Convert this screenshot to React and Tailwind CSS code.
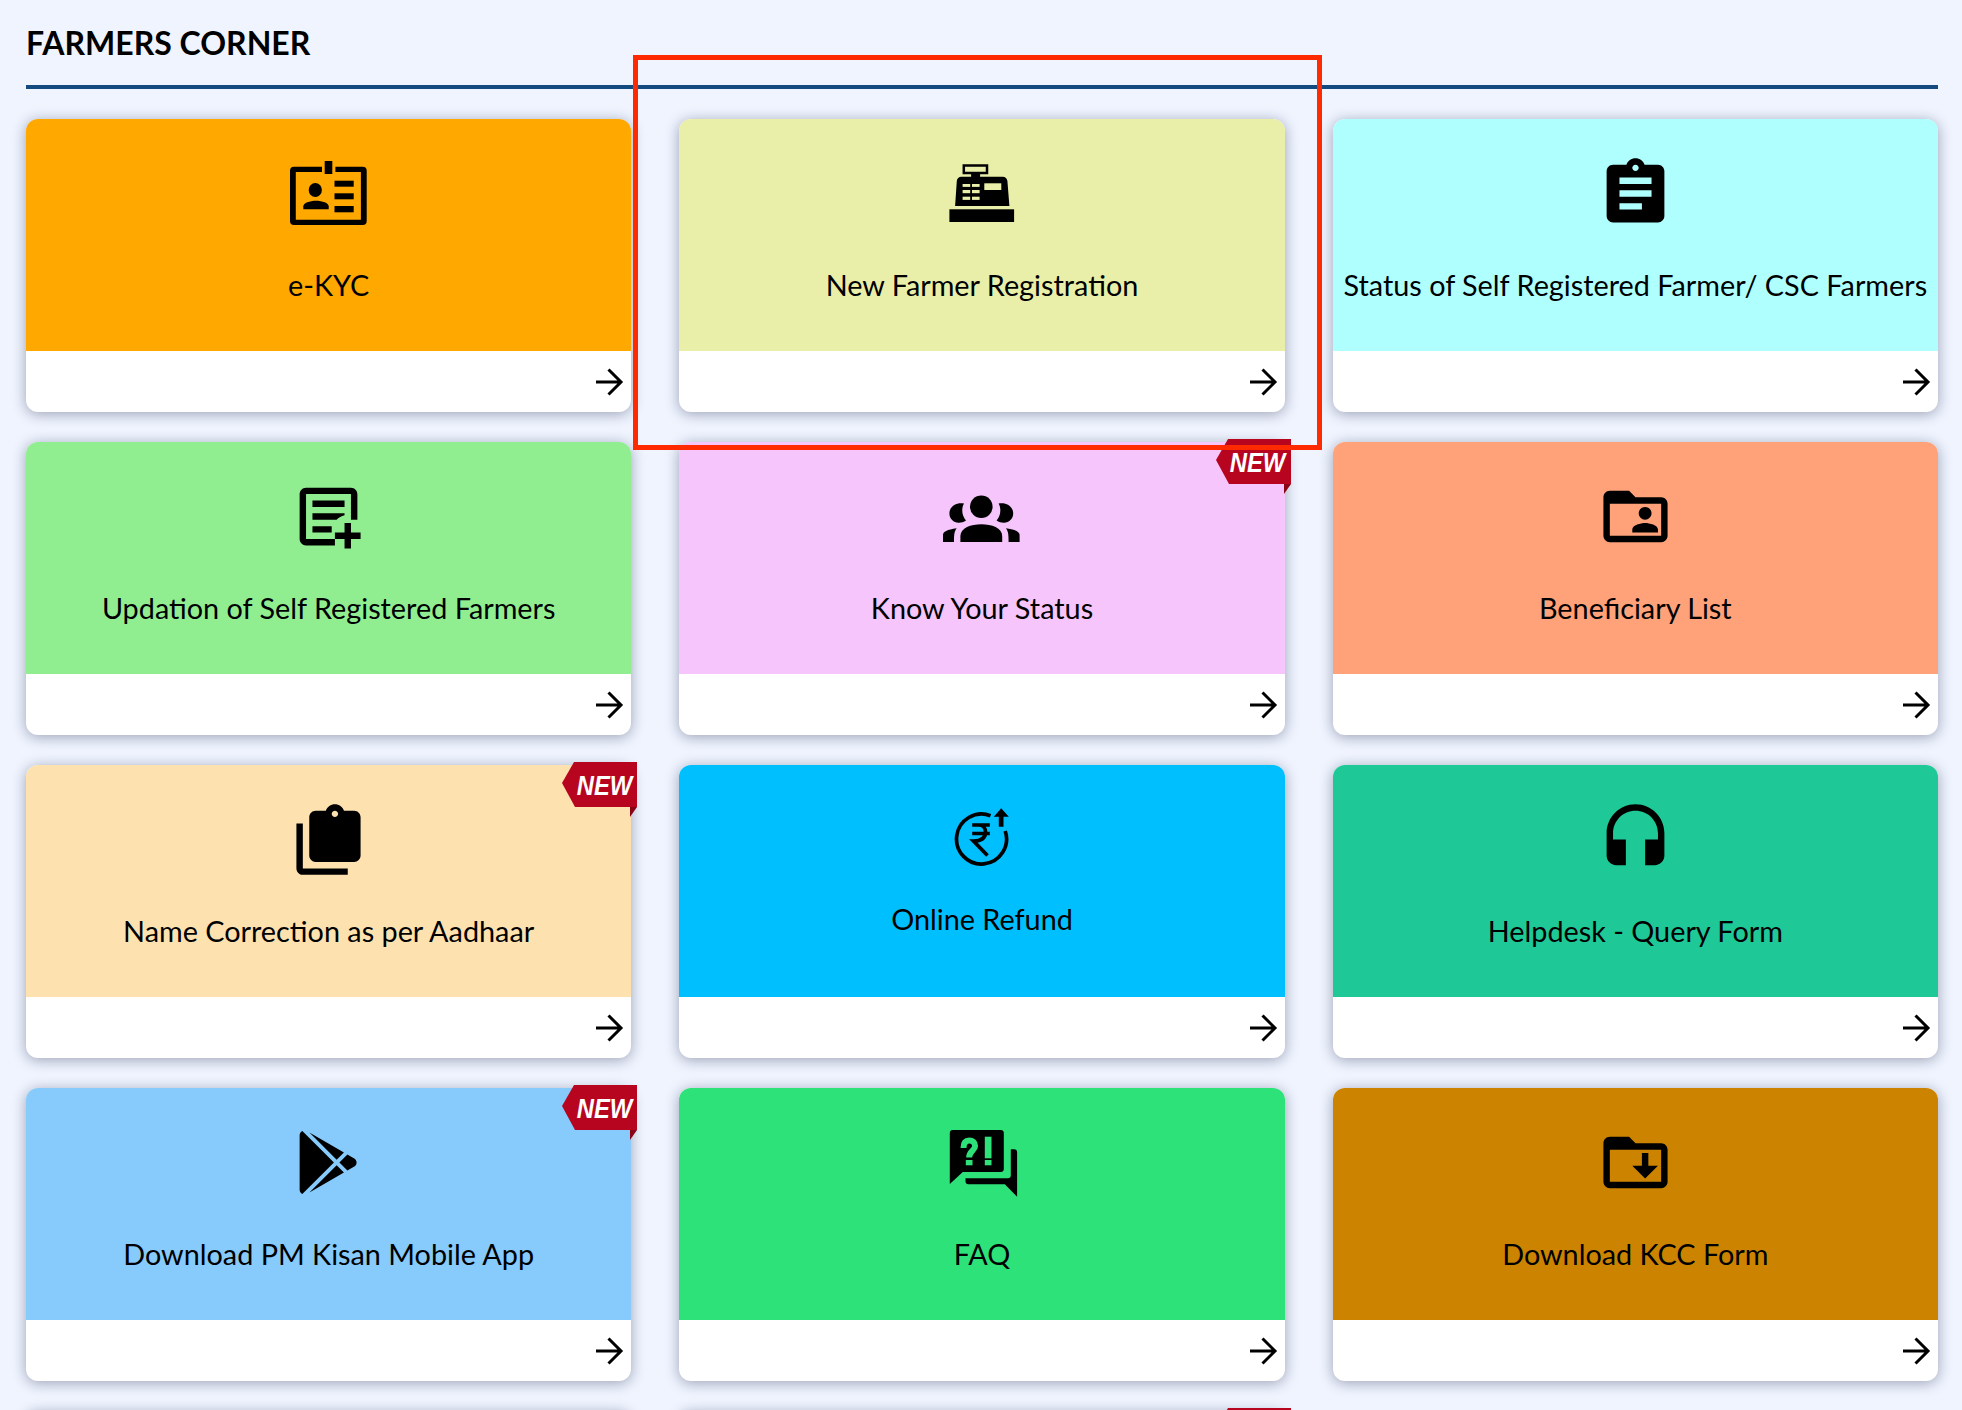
import React from "react";

const Mat = ({ d }) => (
  <svg viewBox="0 0 24 24" className="w-[77px] h-[77px] block" fill="#000">
    <path d={d} />
  </svg>
);

const IdIcon = () => (
  <svg viewBox="0 0 77 77" className="w-[77px] h-[77px] block" fill="#000">
    <path d="M32 11.700H4a4 4 0 0 0-4 4V66a4 4 0 0 0 4 4h68.700a4 4 0 0 0 4-4V15.700a4 4 0 0 0-4-4H45.400v5.300h25.500v47.700H5.800V17H32z" />
    <rect x="34.700" y="6" width="7.600" height="13" />
    <ellipse cx="25.300" cy="35" rx="6.600" ry="7" />
    <path d="M13.300 54.300v-3c0-3.400 6.500-5.600 12.700-5.600s12.700 2.200 12.700 5.600v3z" />
    <rect x="44.500" y="25.700" width="19.200" height="6" />
    <rect x="44.500" y="38.300" width="19.200" height="6" />
    <rect x="44.500" y="51" width="19.200" height="6.300" />
  </svg>
);

const RegisterIcon = () => (
  <svg viewBox="0 0 77 77" className="w-[77px] h-[77px] block">
    <g transform="translate(0.800 0)">
      <rect x="5.600" y="54.300" width="64.700" height="12.700" fill="#000" />
      <path d="M11.300 51 13 26c.2-2.600 2-4.300 4.500-4.300h9.800V19h9v2.700H59c2.500 0 4.300 1.700 4.600 4.300l2 25z" fill="#000" />
      <rect x="20" y="10.500" width="23.200" height="7.500" fill="none" stroke="#000" strokeWidth="2.500" />
      <g fill="#e9efa8">
        <rect x="18.800" y="29" width="7.600" height="2.900" />
        <rect x="28.200" y="29" width="7.600" height="2.900" />
        <rect x="18.800" y="35" width="7.600" height="3.200" />
        <rect x="28.200" y="35" width="7.600" height="3.200" />
        <rect x="18.800" y="41.700" width="7.600" height="3.200" />
        <rect x="28.200" y="41.700" width="7.600" height="3.200" />
        <rect x="40.500" y="28.300" width="17" height="6.700" />
      </g>
    </g>
  </svg>
);

const RefundIcon = () => (
  <svg viewBox="0 0 77 65" className="w-[77px] h-[65px] block" fill="none" stroke="#000">
    <g transform="translate(1.500 0)">
      <path d="M60.700 30A25 25 0 1 1 46 14.700" strokeWidth="3.700" />
      <path d="M56.700 7.300 64.300 15.700H59V25.700H54.300V15.700H49.300z" fill="#000" stroke="none" />
      <path d="M27.700 24H45.300M27.700 32.500H45.300M34 24C39 24 41 27.500 41 31C41 37 37 40 29 40L43 54.500" strokeWidth="3.700" />
    </g>
  </svg>
);

const GroupsIcon = () => (
  <svg viewBox="0 0 77 77" className="w-[77px] h-[77px] block" fill="#000">
    <circle cx="38.300" cy="28.700" r="11.300" />
    <path d="M17.400 64V58C17.400 50 28 46.300 38.300 46.300S59.200 50 59.200 58V64z" />
    <g>
      <path d="M21 25.600C14 24 6.400 28 6.400 35.500C6.400 41 11 45 16 44.700C18 44.700 21 44 23 42.500C19 38 18 31 21 25.600z" />
      <path d="M0 64V57C0 54 4 51.500 13.700 50.300C11.500 53 11 56 11 64z" />
    </g>
    <g transform="translate(76.600 0) scale(-1 1)">
      <path d="M21 25.600C14 24 6.400 28 6.400 35.500C6.400 41 11 45 16 44.700C18 44.700 21 44 23 42.500C19 38 18 31 21 25.600z" />
      <path d="M0 64V57C0 54 4 51.500 13.700 50.300C11.500 53 11 56 11 64z" />
    </g>
  </svg>
);

const FaqIcon = () => (
  <svg viewBox="0 0 77 77" className="w-[77px] h-[77px] block">
    <g transform="translate(0.800 0)">
      <path fill="#000" d="M9 6h48a3 3 0 0 1 3 3v36a3 3 0 0 1-3 3H19L6 60V9a3 3 0 0 1 3-3z" />
      <path fill="#000" d="M67 25.300h3.300a3 3 0 0 1 3 3V72.700L61 60.300H24.700a3 3 0 0 1-3-3V54.300H64a3 3 0 0 0 3-3z" />
      <rect x="41" y="12.700" width="6.700" height="21.600" fill="#2ee27a" />
      <rect x="41" y="36" width="6.700" height="5.300" fill="#2ee27a" />
      <rect x="22" y="36" width="6.700" height="5.300" fill="#2ee27a" />
      <path d="M19.700 24C19.700 18.500 22 16.500 25.500 16.500C29 16.500 31.300 18.500 31.300 22C31.300 26.500 25.300 27 25.300 33.500" fill="none" stroke="#2ee27a" strokeWidth="6" />
    </g>
  </svg>
);

const P = {
  assignment: "M19 3h-4.180C14.400 1.840 13.300 1 12 1c-1.300 0-2.400.840-2.820 2H5c-1.100 0-2 .900-2 2v14c0 1.100.900 2 2 2h14c1.100 0 2-.900 2-2V5c0-1.100-.900-2-2-2zm-7 0c.550 0 1 .450 1 1s-.450 1-1 1-1-.450-1-1 .450-1 1-1zm2 14H7v-2h7v2zm3-4H7v-2h10v2zm0-4H7V7h10v2z",
  postAdd: "M5 3h14c1.100 0 2 .900 2 2v8h-2V5H5v14h9v2H5c-1.100 0-2-.900-2-2V5c0-1.100.900-2 2-2zM7 7h10v2H7zM7 11h10v.600c-1 .200-1.800.700-2.500 1.400H7zM7 15h6v2H7zM17 14h2v3h3v2h-3v3h-2v-3h-3v-2h3z",
  folderShared: "M20 6h-8l-2-2H4c-1.100 0-2 .900-2 2v12c0 1.100.900 2 2 2h16c1.100 0 2-.900 2-2V8c0-1.100-.900-2-2-2zm0 12H4V8h16v10zM15 13c1.100 0 2-.900 2-2s-.900-2-2-2-2 .900-2 2 .900 2 2 2zm4 4v-1c0-1.330-2.670-2-4-2s-4 .670-4 2v1h8z",
  copy: "M2 7h2v14h14v2H4c-1.100 0-2-.900-2-2V7zM20 3h-3.180C16.400 1.840 15.300 1 14 1c-1.300 0-2.400.840-2.820 2H8c-1.100 0-2 .900-2 2v12c0 1.100.900 2 2 2h12c1.100 0 2-.900 2-2V5c0-1.100-.900-2-2-2zm-6 0c.550 0 1 .450 1 1s-.450 1-1 1-1-.450-1-1 .450-1 1-1z",
  headset: "M12 1c-4.970 0-9 4.030-9 9v7c0 1.660 1.340 3 3 3h3v-8H5v-2c0-3.870 3.130-7 7-7s7 3.130 7 7v2h-4v8h3c1.660 0 3-1.340 3-3v-7c0-4.970-4.030-9-9-9z",
  play: "M3,20.500V3.500C3,2.910 3.340,2.390 3.840,2.150L13.690,12L3.840,21.850C3.340,21.600 3,21.090 3,20.500M16.810,15.120L6.050,21.340L14.540,12.850L16.810,15.120M20.160,10.810C20.500,11.080 20.750,11.500 20.750,12C20.750,12.500 20.530,12.900 20.180,13.180L17.890,14.500L15.390,12L17.890,9.500L20.160,10.810M6.050,2.660L16.810,8.880L14.540,11.150L6.050,2.660Z",
  folderDown: "M20 6h-8l-2-2H4c-1.100 0-2 .900-2 2v12c0 1.100.900 2 2 2h16c1.100 0 2-.900 2-2V8c0-1.100-.900-2-2-2zm0 12H4V8h16v10zM14 9h2v4h3l-4 4-4-4h3z",
};

const Arrow = () => (
  <svg viewBox="0 0 28 28" className="w-[28px] h-[28px] block" fill="none" stroke="#000" strokeWidth="3">
    <path d="M0 14H25M12.500 1.500 25 14 12.500 26.500" />
  </svg>
);

const NewBadge = ({ hideText }) => (
  <div className="absolute top-[-3px] right-[-6px] w-[75px] h-[55px] z-10">
    <svg viewBox="0 0 75 55" className="absolute inset-0 w-[75px] h-[55px]">
      <path d="M12 0H75V45H13L0 21z" fill="#b8051f" />
      <path d="M68 45H75L68 55z" fill="#8a0416" />
    </svg>
    {!hideText && (
      <span className="absolute right-[5px] top-[9px] text-white italic font-bold text-[28px] leading-[30px] origin-right scale-x-[0.85] font-['Liberation_Sans',sans-serif]">NEW</span>
    )}
  </div>
);

const Card = ({ bg, icon, label, badge, hideText }) => (
  <div className="relative rounded-[12px] bg-white h-[293px] shadow-[0_2px_14px_rgba(20,25,60,0.38)] flex flex-col">
    {badge && <NewBadge hideText={hideText} />}
    <div className={`h-[232px] rounded-t-[12px] flex flex-col items-center pt-[36px] ${bg}`}>
      {icon}
      {label && <div className="mt-[32px] text-[28.8px] leading-[42px] text-black whitespace-nowrap">{label}</div>}
    </div>
    <div className="flex-1 flex items-center justify-end pr-[7px]">
      <Arrow />
    </div>
  </div>
);

const cards = [
  { bg: "bg-[#ffa800]", icon: <IdIcon />, label: "e-KYC" },
  { bg: "bg-[#e9efa8]", icon: <RegisterIcon />, label: "New Farmer Registration" },
  { bg: "bg-[#afffff]", icon: <Mat d={P.assignment} />, label: "Status of Self Registered Farmer/ CSC Farmers" },
  { bg: "bg-[#90ee90]", icon: <Mat d={P.postAdd} />, label: "Updation of Self Registered Farmers" },
  { bg: "bg-[#f6c5fb]", icon: <GroupsIcon />, label: "Know Your Status", badge: true },
  { bg: "bg-[#ffa27a]", icon: <Mat d={P.folderShared} />, label: "Beneficiary List" },
  { bg: "bg-[#fde2b0]", icon: <Mat d={P.copy} />, label: "Name Correction as per Aadhaar", badge: true },
  { bg: "bg-[#00bfff]", icon: <RefundIcon />, label: "Online Refund" },
  { bg: "bg-[#1ec997]", icon: <Mat d={P.headset} />, label: "Helpdesk - Query Form" },
  { bg: "bg-[#87cafc]", icon: <Mat d={P.play} />, label: "Download PM Kisan Mobile App", badge: true },
  { bg: "bg-[#2ee27a]", icon: <FaqIcon />, label: "FAQ" },
  { bg: "bg-[#cc8400]", icon: <Mat d={P.folderDown} />, label: "Download KCC Form" },
  { bg: "bg-[#e9efa8]" },
  { bg: "bg-[#e9efa8]", badge: true, hideText: true },
];

export default function App() {
  return (
    <div className="relative h-[1410px] overflow-hidden bg-[#eff4ff] pl-[26px] pr-[24px] font-['Lato',sans-serif]">
      <h2 className="pt-[22px] pb-[21px] text-[32px] leading-[42px] font-bold text-black border-b-4 border-[#134a7f] mb-[30px]">
        FARMERS CORNER
      </h2>
      <div className="grid grid-cols-3 gap-x-[48px] gap-y-[30px]">
        {cards.map((c, i) => (
          <Card key={i} {...c} />
        ))}
      </div>
      <div className="absolute left-[633px] top-[55px] w-[689px] h-[395px] border-[5px] border-[#ff2a00] z-20 pointer-events-none" />
    </div>
  );
}
